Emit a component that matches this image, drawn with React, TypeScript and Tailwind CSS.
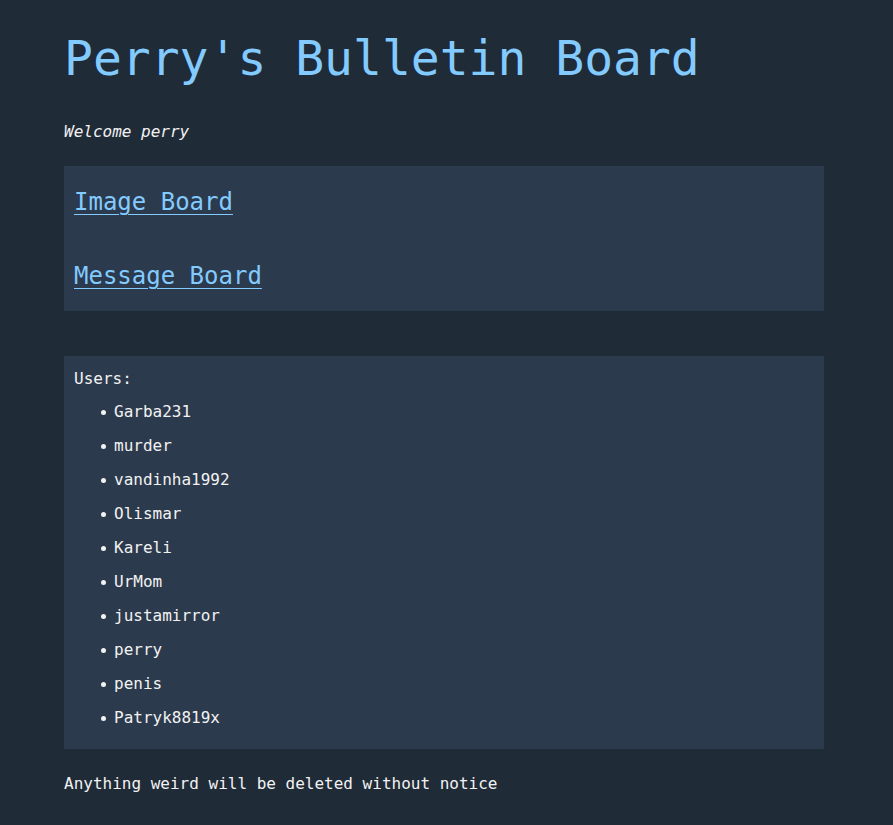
import React from "react";

const users = [
  "Garba231",
  "murder",
  "vandinha1992",
  "Olismar",
  "Kareli",
  "UrMom",
  "justamirror",
  "perry",
  "penis",
  "Patryk8819x",
];

export default function App() {
  return (
    <div
      className="min-h-[825px] w-full bg-[#202b38] text-white"
      style={{ fontFamily: '"DejaVu Sans Mono", "Liberation Mono", monospace' }}
    >
      <div className="ml-16 w-[760px] pt-[30px] pb-10">
        <h1 className="text-[48px] leading-[56px] text-[#83cbff]">Perry's Bulletin Board</h1>
        <p className="mt-[34px] text-base leading-6 italic text-[#f2f2f2]">Welcome perry</p>
        <div className="mt-[22px] bg-[#2c3a4d] px-[10px] pt-[18px] pb-[17px]">
          <div className="text-[24px] leading-9">
            <a href="#" className="text-[#83cbff] underline underline-offset-[4px] decoration-1">
              Image Board
            </a>
          </div>
          <div className="mt-[38px] text-[24px] leading-9">
            <a href="#" className="text-[#83cbff] underline underline-offset-[4px] decoration-1">
              Message Board
            </a>
          </div>
        </div>
        <div className="mt-[45px] bg-[#2c3a4d] px-[10px] pt-[11px] pb-[19px] text-base leading-6 text-[#f2f2f2]">
          <div>Users:</div>
          <ul className="mt-[9px] flex flex-col gap-[10px] pl-10">
            {users.map((u) => (
              <li key={u} className="relative">
                <span className="absolute left-[-13px] top-[10px] h-[5px] w-[5px] rounded-full bg-[#f2f2f2]" />
                {u}
              </li>
            ))}
          </ul>
        </div>
        <p className="mt-[23px] text-base leading-6 text-[#f2f2f2]">
          Anything weird will be deleted without notice
        </p>
      </div>
    </div>
  );
}
